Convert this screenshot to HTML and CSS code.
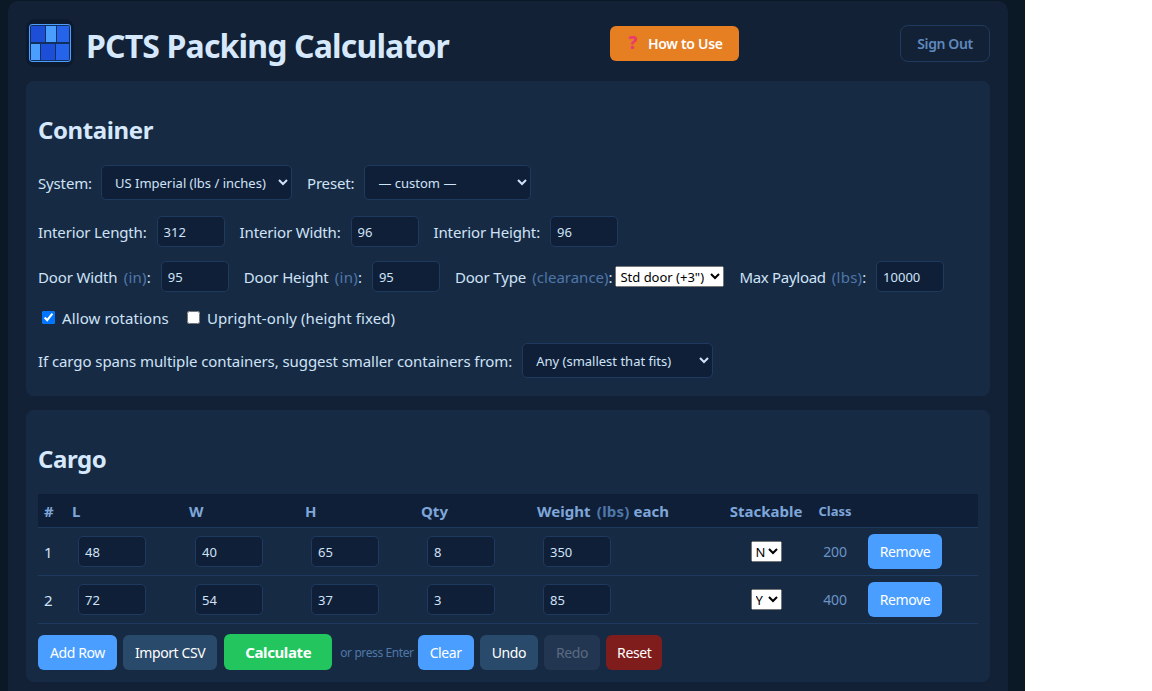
FILE: index.html
```html
<!DOCTYPE html>
<html lang="en">
<head>
  <meta charset="UTF-8" />
  <title>PCTS Packing Calculator</title>
  <link rel="stylesheet" href="styles.css">
</head>
<body>
  <div class="panel">
    <header class="top">
      <div class="brand">
        <svg class="logo" width="48" height="48" viewBox="0 0 48 48">
          <rect width="48" height="48" rx="9" fill="#0d1a2e"/>
          <rect x="3.5" y="5.5" width="41" height="37" rx="2.5" fill="#12305e" stroke="#4a9eff"/>
          <rect x="5" y="7" width="14" height="16" fill="#1d4ed8"/>
          <rect x="20" y="7" width="10" height="16" fill="#4a9eff"/>
          <rect x="31" y="7" width="12" height="16" fill="#2563eb"/>
          <rect x="5" y="25" width="9" height="16" fill="#4a9eff"/>
          <rect x="15" y="25" width="14" height="16" fill="#1d4ed8"/>
          <rect x="30" y="25" width="13" height="16" fill="#2563eb"/>
        </svg>
        <h1>PCTS Packing Calculator</h1>
      </div>
      <button class="btn btn-howto"><span class="qmark">?</span>How to Use</button>
      <button class="btn btn-signout">Sign Out</button>
    </header>

    <section class="card">
      <h2>Container</h2>
      <div class="row">
        <label class="field narrow">System:
          <select class="dark-select sys"><option>US Imperial (lbs / inches)</option></select>
        </label>
        <label class="field">Preset:
          <select class="dark-select preset"><option>— custom —</option></select>
        </label>
      </div>
      <div class="row">
        <label class="field">Interior Length: <input class="num" value="312"></label>
        <label class="field">Interior Width: <input class="num" value="96"></label>
        <label class="field">Interior Height: <input class="num" value="96"></label>
      </div>
      <div class="row">
        <label class="field"><span>Door Width <span class="unit">(in)</span>:</span> <input class="num" value="95"></label>
        <label class="field"><span>Door Height <span class="unit">(in)</span>:</span> <input class="num" value="95"></label>
        <label class="field tight"><span>Door Type <span class="unit">(clearance)</span>:</span>
          <select class="plain-select"><option>Std door (+3")</option></select>
        </label>
        <label class="field payload"><span>Max Payload <span class="unit">(lbs)</span>:</span> <input class="num" value="10000"></label>
      </div>
      <div class="row checks">
        <label class="check"><input type="checkbox" checked> Allow rotations</label>
        <label class="check"><input type="checkbox"> Upright-only (height fixed)</label>
      </div>
      <div class="row last">
        <label class="field long">If cargo spans multiple containers, suggest smaller containers from:
          <select class="dark-select sys"><option>Any (smallest that fits)</option></select>
        </label>
      </div>
    </section>

    <section class="card">
      <h2>Cargo</h2>
      <table class="cargo">
        <colgroup>
          <col class="c-num"><col class="c-dim"><col class="c-dim2"><col class="c-dim2"><col class="c-dim2">
          <col class="c-wt"><col class="c-stack"><col class="c-class"><col class="c-act">
        </colgroup>
        <thead>
          <tr>
            <th class="hash">#</th><th>L</th><th>W</th><th>H</th><th>Qty</th>
            <th>Weight <span class="unit">(lbs)</span> each</th>
            <th class="mid">Stackable</th><th class="mid small">Class</th><th></th>
          </tr>
        </thead>
        <tbody>
          <tr>
            <td class="hash">1</td>
            <td><input class="num" value="48"></td><td><input class="num" value="40"></td>
            <td><input class="num" value="65"></td><td><input class="num" value="8"></td>
            <td><input class="num" value="350"></td>
            <td class="mid"><select class="plain-select yn"><option>N</option></select></td>
            <td class="mid klass">200</td>
            <td class="act"><button class="btn btn-blue">Remove</button></td>
          </tr>
          <tr>
            <td class="hash">2</td>
            <td><input class="num" value="72"></td><td><input class="num" value="54"></td>
            <td><input class="num" value="37"></td><td><input class="num" value="3"></td>
            <td><input class="num" value="85"></td>
            <td class="mid"><select class="plain-select yn"><option>Y</option></select></td>
            <td class="mid klass">400</td>
            <td class="act"><button class="btn btn-blue">Remove</button></td>
          </tr>
        </tbody>
      </table>
      <div class="actions">
        <button class="btn btn-blue">Add Row</button>
        <button class="btn btn-slate">Import CSV</button>
        <button class="btn btn-green">Calculate</button>
        <span class="hint">or press Enter</span>
        <button class="btn btn-blue">Clear</button>
        <button class="btn btn-slate">Undo</button>
        <button class="btn btn-off">Redo</button>
        <button class="btn btn-red">Reset</button>
      </div>
    </section>
  </div>
</body>
</html>
```

FILE: styles.css
```css
html {
  background: #fff;
  height: 100%;
  overflow: hidden;
}
body {
  margin: 0;
  width: 1025px;
  height: 691px;
  overflow: hidden;
  background: #0b1826;
  font-family: "Noto Sans", "Open Sans", sans-serif;
  font-size: 15px;
  letter-spacing: -0.15px;
  color: #cfe3f7;
}
.panel {
  box-sizing: border-box;
  margin: 1px 0 0 8px;
  width: 1000px;
  height: 720px;
  padding: 0 18px;
  background: #132136;
  border-radius: 10px;
}
.top {
  box-sizing: border-box;
  display: flex;
  align-items: center;
  justify-content: space-between;
  height: 80px;
  padding-top: 4px;
}
.brand {
  display: flex;
  align-items: center;
  gap: 12px;
  height: 48px;
}
.logo { display: block; }
h1 {
  margin: 4px 0 0;
  font-size: 32px;
  font-weight: 700;
  letter-spacing: -0.85px;
  color: #d6e8fb;
}
.card {
  background: #172a44;
  border-radius: 8px;
  padding: 33px 12px 12px;
  margin-bottom: 14px;
}
h2 {
  margin: 0 0 19px;
  font-size: 24px;
  line-height: 32px;
  font-weight: 700;
  letter-spacing: -0.4px;
  color: #d6e8fb;
}
.row {
  display: flex;
  align-items: center;
  gap: 15px;
  margin-bottom: 14px;
}
.row:first-of-type { margin-bottom: 16px; }
.row.last { margin-bottom: 6px; }
.row.checks {
  gap: 18px;
  height: 21px;
  padding-left: 4px;
  margin-top: 15px;
  margin-bottom: 15px;
  letter-spacing: 0.1px;
}
.field {
  display: flex;
  align-items: center;
  gap: 10px;
}
.field.narrow { gap: 9px; }
.field.tight { gap: 3px; }
.field.tight .unit { letter-spacing: 0; }
.field.payload { letter-spacing: -0.3px; }
.field.long { letter-spacing: -0.08px; }
.check {
  display: flex;
  align-items: center;
  gap: 7px;
}
.check input {
  width: 13px;
  height: 13px;
  margin: 0;
}
.unit {
  color: #4f77a8;
  margin-left: 2.5px;
  letter-spacing: 0.25px;
}
.num {
  box-sizing: border-box;
  width: 68px;
  height: 31px;
  padding: 0 6px;
  background: #0f1f38;
  border: 1px solid #1f3a5f;
  border-radius: 5px;
  color: #cfe3f7;
  font: 13px "Noto Sans", sans-serif;
}
.dark-select {
  box-sizing: border-box;
  height: 35px;
  padding: 0 0 0 9px;
  background: #0f1f38;
  border: 1px solid #1f3a5f;
  border-radius: 5px;
  color: #cfe3f7;
  font: 13px "Noto Sans", sans-serif;
}
.sys { width: 191px; }
.preset { width: 167px; }
.plain-select {
  box-sizing: border-box;
  width: 109px;
  height: 21px;
  font: 13px "Noto Sans", sans-serif;
  padding: 0;
}
.plain-select.yn { width: 31px; }
.btn {
  box-sizing: border-box;
  height: 35px;
  padding: 0 12px;
  border: none;
  border-radius: 6px;
  font: 14px "Noto Sans", sans-serif;
  letter-spacing: -0.4px;
  color: #fff;
  white-space: nowrap;
}
.btn-howto {
  width: 129px;
  padding: 0 0 0 2px;
  background: #e67e22;
  font-weight: 600;
  letter-spacing: -0.3px;
}
.qmark {
  color: #ea3a6f;
  font-size: 18px;
  line-height: 14px;
  font-weight: 800;
  margin-right: 11px;
}
.btn-signout {
  width: 90px;
  height: 37px;
  background: transparent;
  border: 1px solid #1f3a5f;
  border-radius: 8px;
  color: #5f89bd;
  font-weight: 600;
}
.btn-blue { background: #4a9eff; }
.btn-slate { background: #2a4a6b; }
.btn-green {
  width: 108px;
  height: 36px;
  margin-left: 1px;
  background: #22c55e;
  font-size: 15px;
  font-weight: 700;
}
.btn-off { background: #223652; color: #5a6b80; }
.btn-red { padding: 0 11px; background: #7f1d1d; }
.cargo {
  width: 940px;
  table-layout: fixed;
  border-collapse: collapse;
}
.c-num { width: 24px; }
.c-dim { width: 117px; }
.c-dim2 { width: 116px; }
.c-wt { width: 193px; }
.c-stack { width: 92px; }
.c-class { width: 46px; }
.c-act { width: 120px; }
.cargo th {
  height: 33px;
  padding: 0 0 0 10px;
  background: #0f1f38;
  border-bottom: 1px solid #1f3a5f;
  color: #7ea6d8;
  text-align: left;
  font-weight: 700;
  letter-spacing: 0;
  white-space: nowrap;
}
.cargo td {
  height: 47px;
  padding: 0 0 0 16px;
  border-bottom: 1px solid #1f3a5f;
}
.cargo .hash { padding-left: 6px; }
.cargo .mid { padding: 0; text-align: center; }
.cargo th.small { font-size: 13px; }
.cargo .act { padding-left: 10px; }
.cargo .act .btn { width: 74px; padding: 0; }
.klass { color: #6b94c4; font-size: 14px; }
.actions {
  display: flex;
  align-items: center;
  gap: 6px;
  margin-top: 10px;
}
.hint {
  margin: 0 -2px 0 2px;
  font-size: 12px;
  letter-spacing: -0.4px;
  color: #4f77a8;
}
```
